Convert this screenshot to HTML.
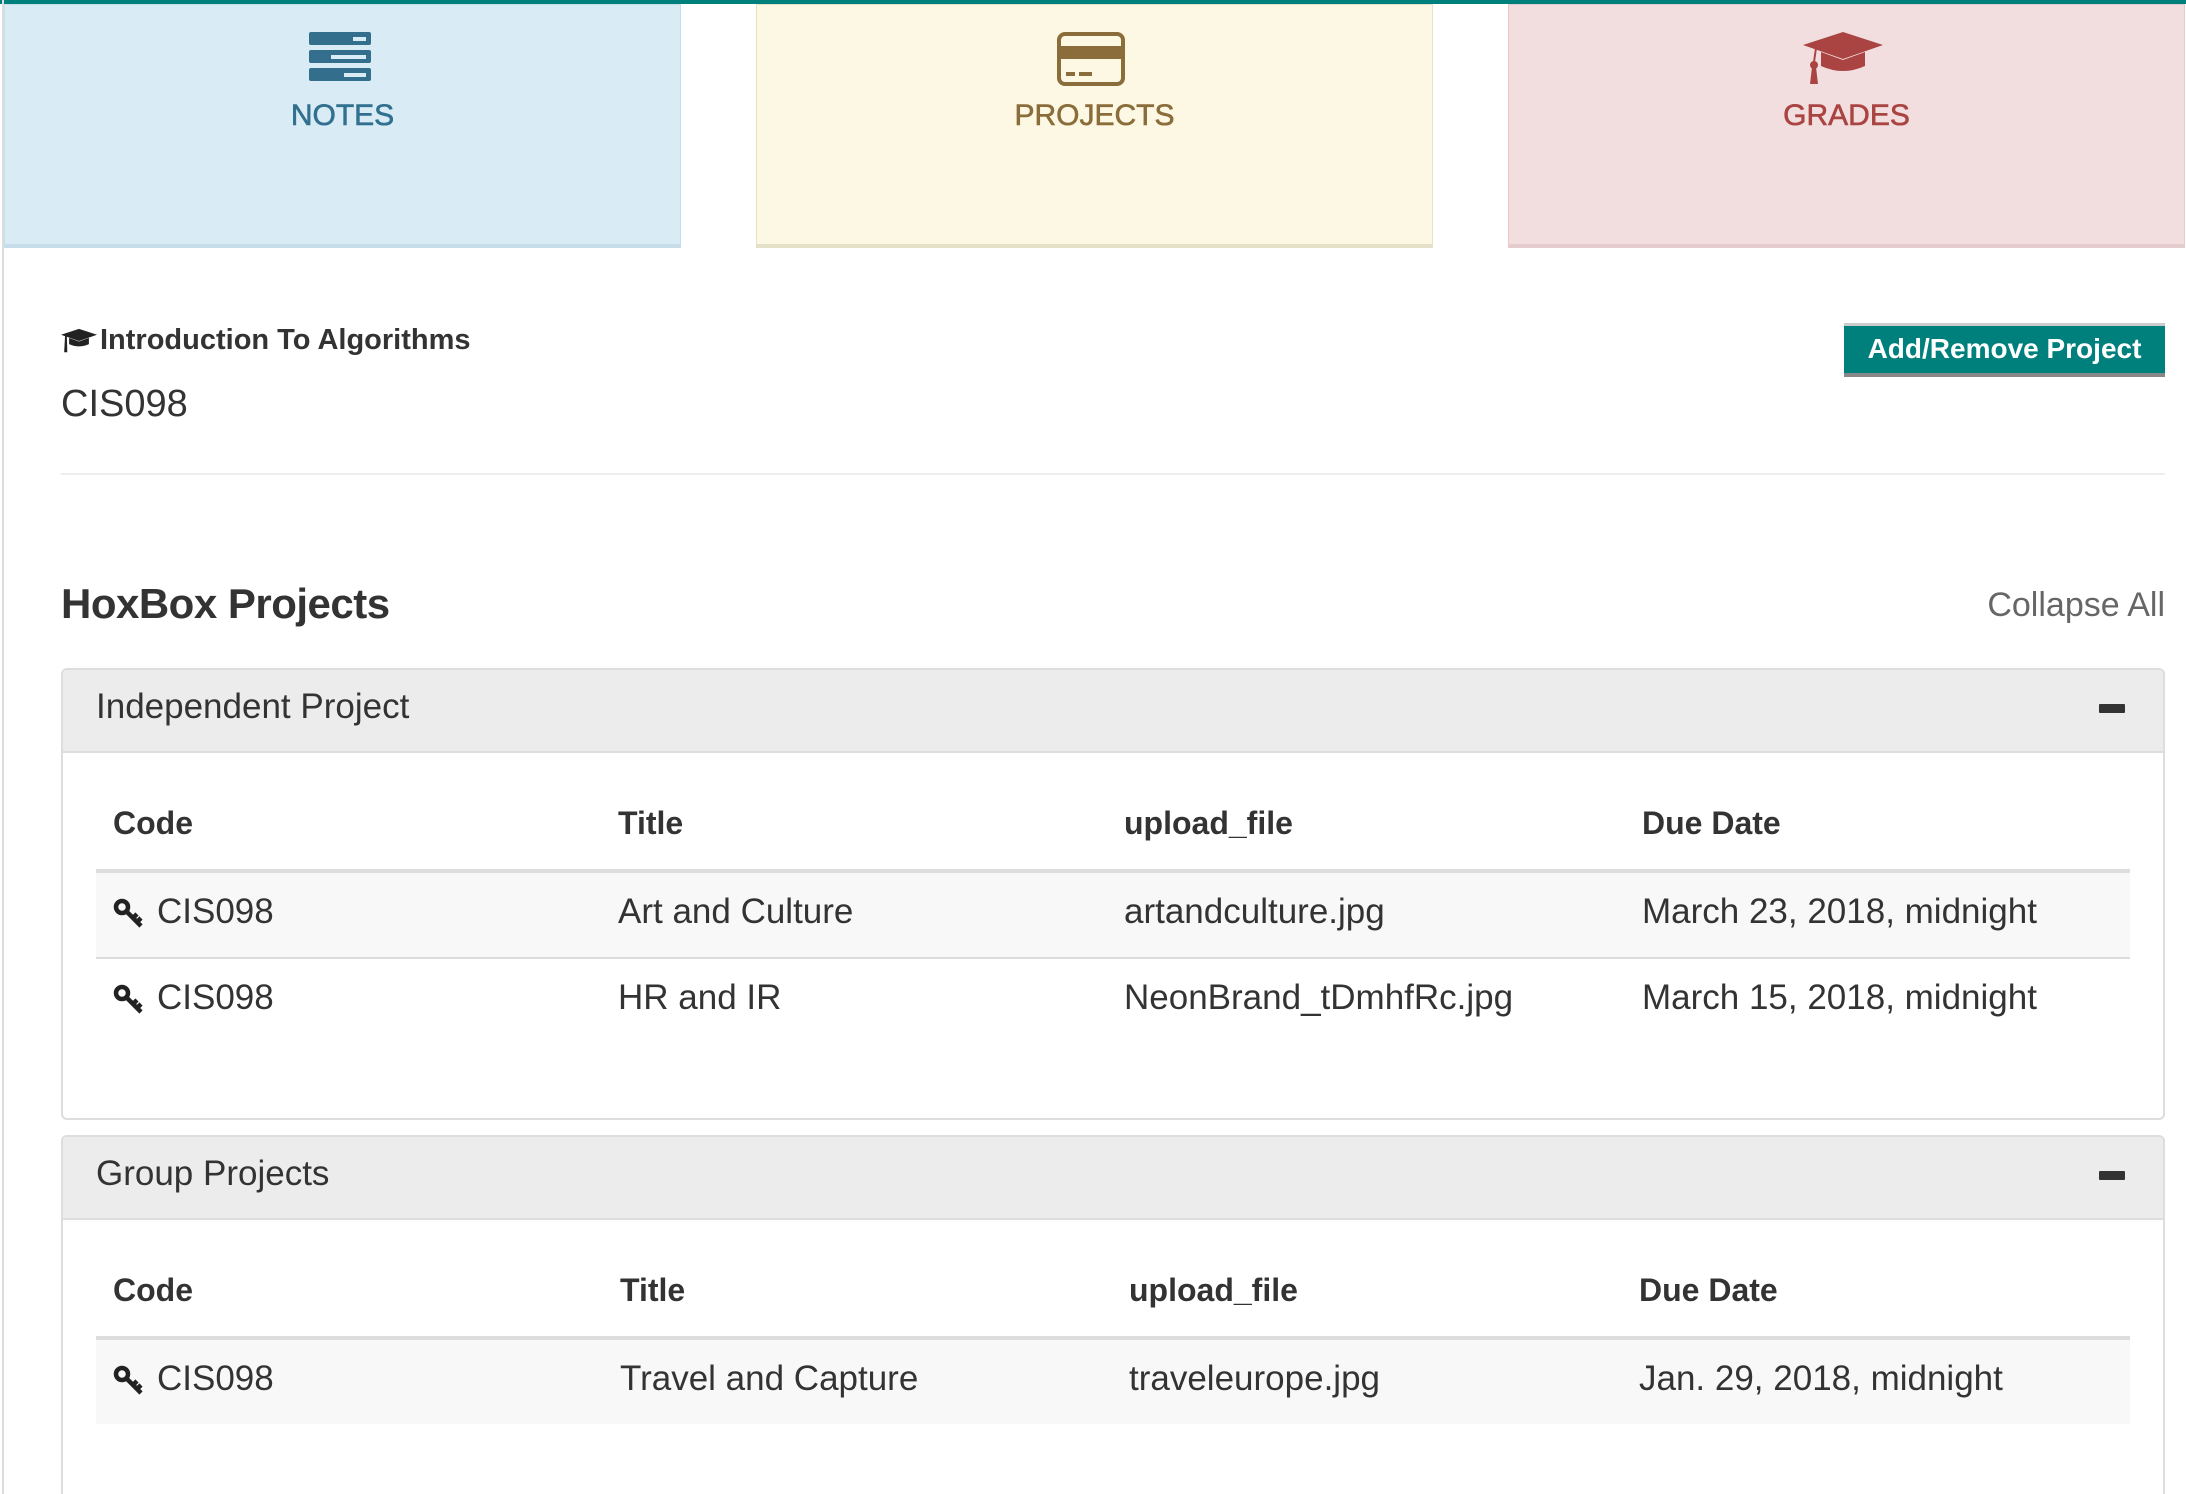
<!DOCTYPE html>
<html><head><meta charset="utf-8"><style>
*{margin:0;padding:0;box-sizing:border-box}
html,body{width:2186px;height:1494px;overflow:hidden}
body{background:#fff;font-family:"Liberation Sans",sans-serif;color:#333;position:relative}
.a{position:absolute;white-space:nowrap}
.card{position:absolute;top:4px;height:244px;border:1px solid #ccc;border-bottom:4px solid #ddd}
.lbl{position:absolute;top:94px;width:100%;text-align:center;font-size:30px;-webkit-text-stroke:0.6px currentColor}
.td{font-size:35px;color:#333}
.th{font-size:32px;font-weight:bold;color:#333}
</style></head><body>
<div class="a" style="left:0;top:0;width:2186px;height:4px;background:#00807c"></div>
<div class="a" style="left:2px;top:0;width:2px;height:1494px;background:#ddd"></div>

<div class="card" style="left:4px;width:677px;background:#d9ebf5;border-color:#c7dde9">
 <svg class="a" style="left:304px;top:27px" width="62" height="50" viewBox="0 0 62 50"><g fill="#336e8c"><rect x="0" y="0" width="62" height="13" rx="2"/><rect x="0" y="18" width="62" height="13" rx="2"/><rect x="0" y="36" width="62" height="13" rx="2"/></g><g fill="#d9ebf5"><rect x="44" y="5" width="13" height="4"/><rect x="22" y="23" width="35" height="4"/><rect x="35" y="41" width="22" height="4"/></g></svg>
 <div class="lbl" style="color:#31708f">NOTES</div>
</div>
<div class="card" style="left:756px;width:677px;background:#fcf8e3;border-color:#e5e0c8">
 <svg class="a" style="left:300px;top:27px" width="68" height="54" viewBox="0 0 68 54"><rect x="2" y="2" width="64" height="50" rx="6" fill="none" stroke="#8a6d3b" stroke-width="4"/><rect x="2" y="14" width="64" height="13" fill="#8a6d3b"/><rect x="9" y="40" width="9" height="4" fill="#8a6d3b"/><rect x="22" y="40" width="13" height="4" fill="#8a6d3b"/></svg>
 <div class="lbl" style="color:#8a6d3b">PROJECTS</div>
</div>
<div class="card" style="left:1508px;width:677px;background:#f2dede;border-color:#e5cccc">
 <svg class="a" style="left:294px;top:27px" width="80" height="54" viewBox="0 0 80 54"><g fill="#a94442"><polygon points="0,13 40,0 80,13 40,27"/><path d="M18,20 L18,34 Q40,44 62,34 L62,20 L40,28 Z"/><path d="M12,16 L10,30 L12,30 L14,16Z"/><circle cx="11" cy="33" r="4"/><path d="M9,35 L7,52 L15,52 L13,35Z"/></g></svg>
 <div class="lbl" style="color:#a94442">GRADES</div>
</div>

<svg class="a" style="left:61px;top:328px" width="36" height="26" viewBox="0 0 80 54"><g fill="#222"><polygon points="0,13 40,0 80,13 40,27"/><path d="M18,20 L18,34 Q40,44 62,34 L62,20 L40,28 Z"/><path d="M9,16 L7,52 L14,52 L13,16Z"/></g></svg>
<div class="a" style="left:100px;top:324px;font-size:29px;font-weight:bold;color:#333;letter-spacing:0px">Introduction To Algorithms</div>
<div class="a" style="left:61px;top:383px;font-size:38px;color:#333">CIS098</div>
<div class="a" style="left:1844px;top:323px;width:321px;height:54px;background:#00807c;border-top:3px solid #ccc;border-bottom:4px solid #888;color:#fff;font-size:28px;font-weight:bold;text-align:center;line-height:46px">Add/Remove Project</div>
<div class="a" style="left:61px;top:473px;width:2104px;height:2px;background:#eee"></div>

<div class="a" style="left:61px;top:580px;font-size:42px;font-weight:bold;color:#333;letter-spacing:-0.5px">HoxBox Projects</div>
<div class="a" style="right:21px;top:586px;font-size:34px;color:#666">Collapse All</div>

<div class="a" style="left:61px;top:668px;width:2104px;height:452px;border:2px solid #ddd;border-radius:6px;overflow:hidden">
 <div style="height:83px;background:#ececec;border-bottom:2px solid #ddd"></div>
</div>
<div class="a" style="left:96px;top:687px;font-size:35px;color:#333">Independent Project</div>
<div class="a" style="left:2099px;top:704px;width:26px;height:9px;background:#333;border-radius:1px"></div>

<div class="a" style="left:96px;top:869px;width:2034px;height:4px;background:#ddd"></div>
<div class="a" style="left:96px;top:873px;width:2034px;height:85px;background:#f8f8f8"></div>
<div class="a" style="left:96px;top:957px;width:2034px;height:2px;background:#ddd"></div>
<div class="a th" style="left:113px;top:805px">Code</div>
<div class="a th" style="left:618px;top:805px">Title</div>
<div class="a th" style="left:1124px;top:805px">upload_file</div>
<div class="a th" style="left:1642px;top:805px">Due Date</div>

<svg class="a" style="left:113px;top:898px" width="32" height="30" viewBox="0 0 32 30"><g fill="none" stroke="#222" stroke-width="4.5"><circle cx="9" cy="9" r="6"/><path d="M13,13 L28,28 M20,20 L24,16 M24,24 L28,20"/></g></svg>
<div class="a td" style="left:157px;top:892px">CIS098</div>
<div class="a td" style="left:618px;top:892px">Art and Culture</div>
<div class="a td" style="left:1124px;top:892px">artandculture.jpg</div>
<div class="a td" style="left:1642px;top:892px">March 23, 2018, midnight</div>

<svg class="a" style="left:113px;top:984px" width="32" height="30" viewBox="0 0 32 30"><g fill="none" stroke="#222" stroke-width="4.5"><circle cx="9" cy="9" r="6"/><path d="M13,13 L28,28 M20,20 L24,16 M24,24 L28,20"/></g></svg>
<div class="a td" style="left:157px;top:978px">CIS098</div>
<div class="a td" style="left:618px;top:978px">HR and IR</div>
<div class="a td" style="left:1124px;top:978px">NeonBrand_tDmhfRc.jpg</div>
<div class="a td" style="left:1642px;top:978px">March 15, 2018, midnight</div>

<div class="a" style="left:61px;top:1135px;width:2104px;height:380px;border:2px solid #ddd;border-radius:6px;overflow:hidden">
 <div style="height:83px;background:#ececec;border-bottom:2px solid #ddd"></div>
</div>
<div class="a" style="left:96px;top:1154px;font-size:35px;color:#333">Group Projects</div>
<div class="a" style="left:2099px;top:1171px;width:26px;height:9px;background:#333;border-radius:1px"></div>

<div class="a" style="left:96px;top:1336px;width:2034px;height:4px;background:#ddd"></div>
<div class="a" style="left:96px;top:1340px;width:2034px;height:84px;background:#f8f8f8"></div>
<div class="a th" style="left:113px;top:1272px">Code</div>
<div class="a th" style="left:620px;top:1272px">Title</div>
<div class="a th" style="left:1129px;top:1272px">upload_file</div>
<div class="a th" style="left:1639px;top:1272px">Due Date</div>

<svg class="a" style="left:113px;top:1365px" width="32" height="30" viewBox="0 0 32 30"><g fill="none" stroke="#222" stroke-width="4.5"><circle cx="9" cy="9" r="6"/><path d="M13,13 L28,28 M20,20 L24,16 M24,24 L28,20"/></g></svg>
<div class="a td" style="left:157px;top:1359px">CIS098</div>
<div class="a td" style="left:620px;top:1359px">Travel and Capture</div>
<div class="a td" style="left:1129px;top:1359px">traveleurope.jpg</div>
<div class="a td" style="left:1639px;top:1359px">Jan. 29, 2018, midnight</div>
</body></html>
